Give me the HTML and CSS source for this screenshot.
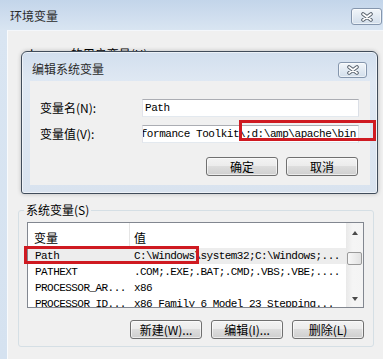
FILE: index.html
```html
<!DOCTYPE html>
<html lang="zh-CN">
<head>
<meta charset="utf-8">
<title>环境变量</title>
<link rel="stylesheet" href="styles.css">
</head>
<body>
<div class="window">
  <div class="titlebar">
    <span class="title">环境变量</span>
    <button class="close" type="button" aria-label="关闭">
      <svg width="14" height="10" viewBox="0 0 14 10"><path d="M3 2 L11 8 M11 2 L3 8" stroke="#56606c" stroke-width="3.6" stroke-linecap="round" fill="none"/><path d="M3 2 L11 8 M11 2 L3 8" stroke="#fff" stroke-width="1.7" stroke-linecap="round" fill="none"/></svg>
    </button>
  </div>
  <div class="client">
    <div class="user-group"><span>lenovo 的用户变量(U)</span></div>
    <fieldset class="group">
      <legend>系统变量(S)</legend>
      <div class="listbox">
        <div class="list-main">
          <div class="list-row list-head"><span class="col-name">变量</span><span class="col-value">值</span></div>
          <div class="list-row selected"><span class="col-name">Path</span><span class="col-value">C:\Windows\system32;C:\Windows;...</span></div>
          <div class="list-row"><span class="col-name">PATHEXT</span><span class="col-value">.COM;.EXE;.BAT;.CMD;.VBS;.VBE;....</span></div>
          <div class="list-row"><span class="col-name">PROCESSOR_AR...</span><span class="col-value">x86</span></div>
          <div class="list-row"><span class="col-name">PROCESSOR_ID...</span><span class="col-value">x86 Family 6 Model 23 Stepping...</span></div>
        </div>
        <div class="scrollbar">
          <div class="sb-btn sb-up"><span class="arrow-up"></span></div>
          <div class="sb-track"><div class="thumb"></div></div>
          <div class="sb-btn"><span class="arrow-down"></span></div>
        </div>
      </div>
      <div class="btn-row">
        <button class="btn" type="button">新建(W)...</button>
        <button class="btn" type="button">编辑(I)...</button>
        <button class="btn" type="button">删除(L)</button>
      </div>
    </fieldset>
  </div>

  <div class="dialog">
    <div class="dialog-title">
      <span class="title">编辑系统变量</span>
      <button class="close small" type="button" aria-label="关闭">
        <svg width="14" height="10" viewBox="0 0 14 10"><path d="M3 2 L11 8 M11 2 L3 8" stroke="#56606c" stroke-width="3.6" stroke-linecap="round" fill="none"/><path d="M3 2 L11 8 M11 2 L3 8" stroke="#fff" stroke-width="1.7" stroke-linecap="round" fill="none"/></svg>
      </button>
    </div>
    <div class="dialog-body">
      <div class="form">
        <label>变量名(N):</label>
        <div class="input">Path</div>
        <label>变量值(V):</label>
        <div class="input value"><span>Performance Toolkit\;d:\amp\apache\bin</span></div>
      </div>
      <div class="btn-row">
        <button class="btn" type="button">确定</button>
        <button class="btn" type="button">取消</button>
      </div>
    </div>
  </div>

  <div class="mark mark-value"></div>
  <div class="mark mark-path"></div>
</div>
</body>
</html>
```

FILE: styles.css
```css
html, body {
  margin: 0;
  padding: 0;
}

body {
  width: 383px;
  height: 359px;
  overflow: hidden;
  font-family: "Noto Sans CJK SC", "Microsoft YaHei", sans-serif;
  font-size: 12px;
  color: #000;
  background: #d4e1ef;
}

.window {
  position: relative;
  height: 359px;
  display: flex;
  flex-direction: column;
  background: linear-gradient(to bottom, #c3d5ea 0, #d9e5f2 30px, #d5e2f0 100%);
}

.titlebar {
  flex: none;
  height: 30px;
  box-sizing: border-box;
  display: flex;
  justify-content: space-between;
  align-items: flex-start;
  padding: 0 1px 0 10px;
}

.title {
  margin-top: 8px;
  line-height: 16px;
  color: #2a2a2a;
}

.close {
  width: 31px;
  height: 17px;
  margin-top: 8px;
  padding: 0;
  box-sizing: border-box;
  border: 1px solid #8596ad;
  border-radius: 3px;
  background: linear-gradient(#f2f6fa, #d2deeb);
  box-shadow: inset 0 0 0 1px rgba(255, 255, 255, 0.55);
  display: flex;
  align-items: center;
  justify-content: center;
}

.close.small {
  width: 29px;
  height: 16px;
  margin-top: 10px;
}

.client {
  flex: 1;
  margin-left: 7px;
  background: #f0f0f0;
  border-left: 1px solid #f9fbfd;
  border-top: 1px solid #f4f7fb;
  padding: 15px 0 0 10px;
}

.user-group {
  height: 156px;
  padding-left: 12px;
  line-height: 16px;
}

.group {
  width: 356px;
  box-sizing: border-box;
  margin: 0;
  min-width: 0;
  border: 1px solid #d5dfe5;
  border-radius: 3px;
  padding: 4px 9px 7px 8px;
}

.group legend {
  padding: 0 2px;
  margin-left: -3px;
  line-height: 16px;
}

.listbox {
  width: 337px;
  height: 86px;
  box-sizing: border-box;
  border: 1px solid #828790;
  background: #fff;
  display: flex;
}

.list-main {
  flex: 1;
  overflow: hidden;
}

.list-row {
  display: flex;
  height: 16px;
  align-items: center;
  white-space: nowrap;
  font-family: "Liberation Mono", "DejaVu Sans Mono", monospace;
  font-size: 11px;
  letter-spacing: -0.55px;
}

.list-row.selected {
  background: #ededed;
}

.col-name {
  flex: none;
  width: 102px;
  box-sizing: border-box;
  padding-left: 7px;
  overflow: hidden;
}

.col-value {
  padding-left: 4px;
}

.list-head {
  height: 25px;
  align-items: stretch;
  font-family: "Noto Sans CJK SC", sans-serif;
  font-size: 12px;
  letter-spacing: 0;
}

.list-head span {
  display: flex;
  align-items: center;
  padding-top: 4px;
}

.list-head .col-name {
  border-right: 1px solid #e5e5e5;
  padding-left: 6px;
}

.scrollbar {
  flex: none;
  width: 17px;
  display: flex;
  flex-direction: column;
  background: linear-gradient(to right, #e9e9e9, #f5f5f5 40%, #f4f4f4);
}

.sb-btn {
  height: 17px;
  display: flex;
  align-items: center;
  justify-content: center;
}

.sb-up {
  padding-top: 2px;
  box-sizing: border-box;
}

.arrow-up,
.arrow-down {
  width: 0;
  height: 0;
  border-left: 3.5px solid transparent;
  border-right: 3.5px solid transparent;
}

.arrow-up {
  border-bottom: 4px solid #4a4a4a;
}

.arrow-down {
  border-top: 4px solid #4a4a4a;
}

.sb-track {
  flex: 1;
}

.thumb {
  margin: 12px 1px 0;
  height: 13px;
  box-sizing: border-box;
  border: 1px solid #9a9a9a;
  border-radius: 2px;
  background: linear-gradient(to right, #f7f7f7, #e2e2e2);
}

.btn-row {
  display: flex;
  justify-content: flex-end;
  gap: 9px;
  margin-top: 12px;
}

.btn {
  width: 72px;
  height: 19px;
  box-sizing: border-box;
  padding: 0;
  border: 1px solid #707070;
  border-radius: 3px;
  background: linear-gradient(#f3f3f3 0%, #ebebeb 49%, #dddddd 50%, #cfcfcf 100%);
  box-shadow: inset 0 0 0 1px rgba(255, 255, 255, 0.6);
  font-family: "Noto Sans CJK SC", sans-serif;
  font-size: 12px;
  line-height: 16px;
  color: #000;
}

.dialog {
  position: absolute;
  left: 21px;
  top: 51px;
  width: 357px;
  height: 143px;
  box-sizing: border-box;
  border: 1px solid #404c5a;
  border-radius: 6px 6px 3px 3px;
  background: linear-gradient(to bottom, #d2dfee 0, #dfe8f3 29px, #d9e3ef 100%);
  box-shadow: 0 0 4px rgba(0, 0, 0, 0.22), inset 0 0 0 1px rgba(255, 255, 255, 0.55);
  display: flex;
  flex-direction: column;
}

.dialog-title {
  flex: none;
  height: 29px;
  display: flex;
  justify-content: space-between;
  align-items: flex-start;
  padding: 0 10px;
}

.dialog-title .title {
  margin-top: 9px;
}

.dialog-body {
  flex: 1;
  margin: 0 7px 8px 8px;
  background: #f0f0f0;
  padding: 18px 12px 0 10px;
}

.form {
  display: grid;
  grid-template-columns: 102px 217px;
  row-gap: 8px;
  align-items: center;
}

.form label {
  line-height: 16px;
}

.input {
  height: 18px;
  box-sizing: border-box;
  border: 1px solid;
  border-color: #abadb3 #dbdfe6 #e3e9ef #e2e3ea;
  background: #fff;
  padding: 0 2px;
  display: flex;
  align-items: center;
  white-space: nowrap;
  overflow: hidden;
  font-family: "Liberation Mono", "DejaVu Sans Mono", monospace;
  font-size: 11px;
  letter-spacing: -0.45px;
}

.input.value {
  justify-content: flex-end;
}

.dialog-body .btn-row {
  margin-top: 14px;
  gap: 8px;
}

.mark {
  position: absolute;
  box-sizing: border-box;
  border: 3px solid #cf1a21;
}

.mark-value {
  left: 239px;
  top: 120px;
  width: 137px;
  height: 21px;
}

.mark-path {
  left: 24px;
  top: 246px;
  width: 175px;
  height: 18px;
}
```
